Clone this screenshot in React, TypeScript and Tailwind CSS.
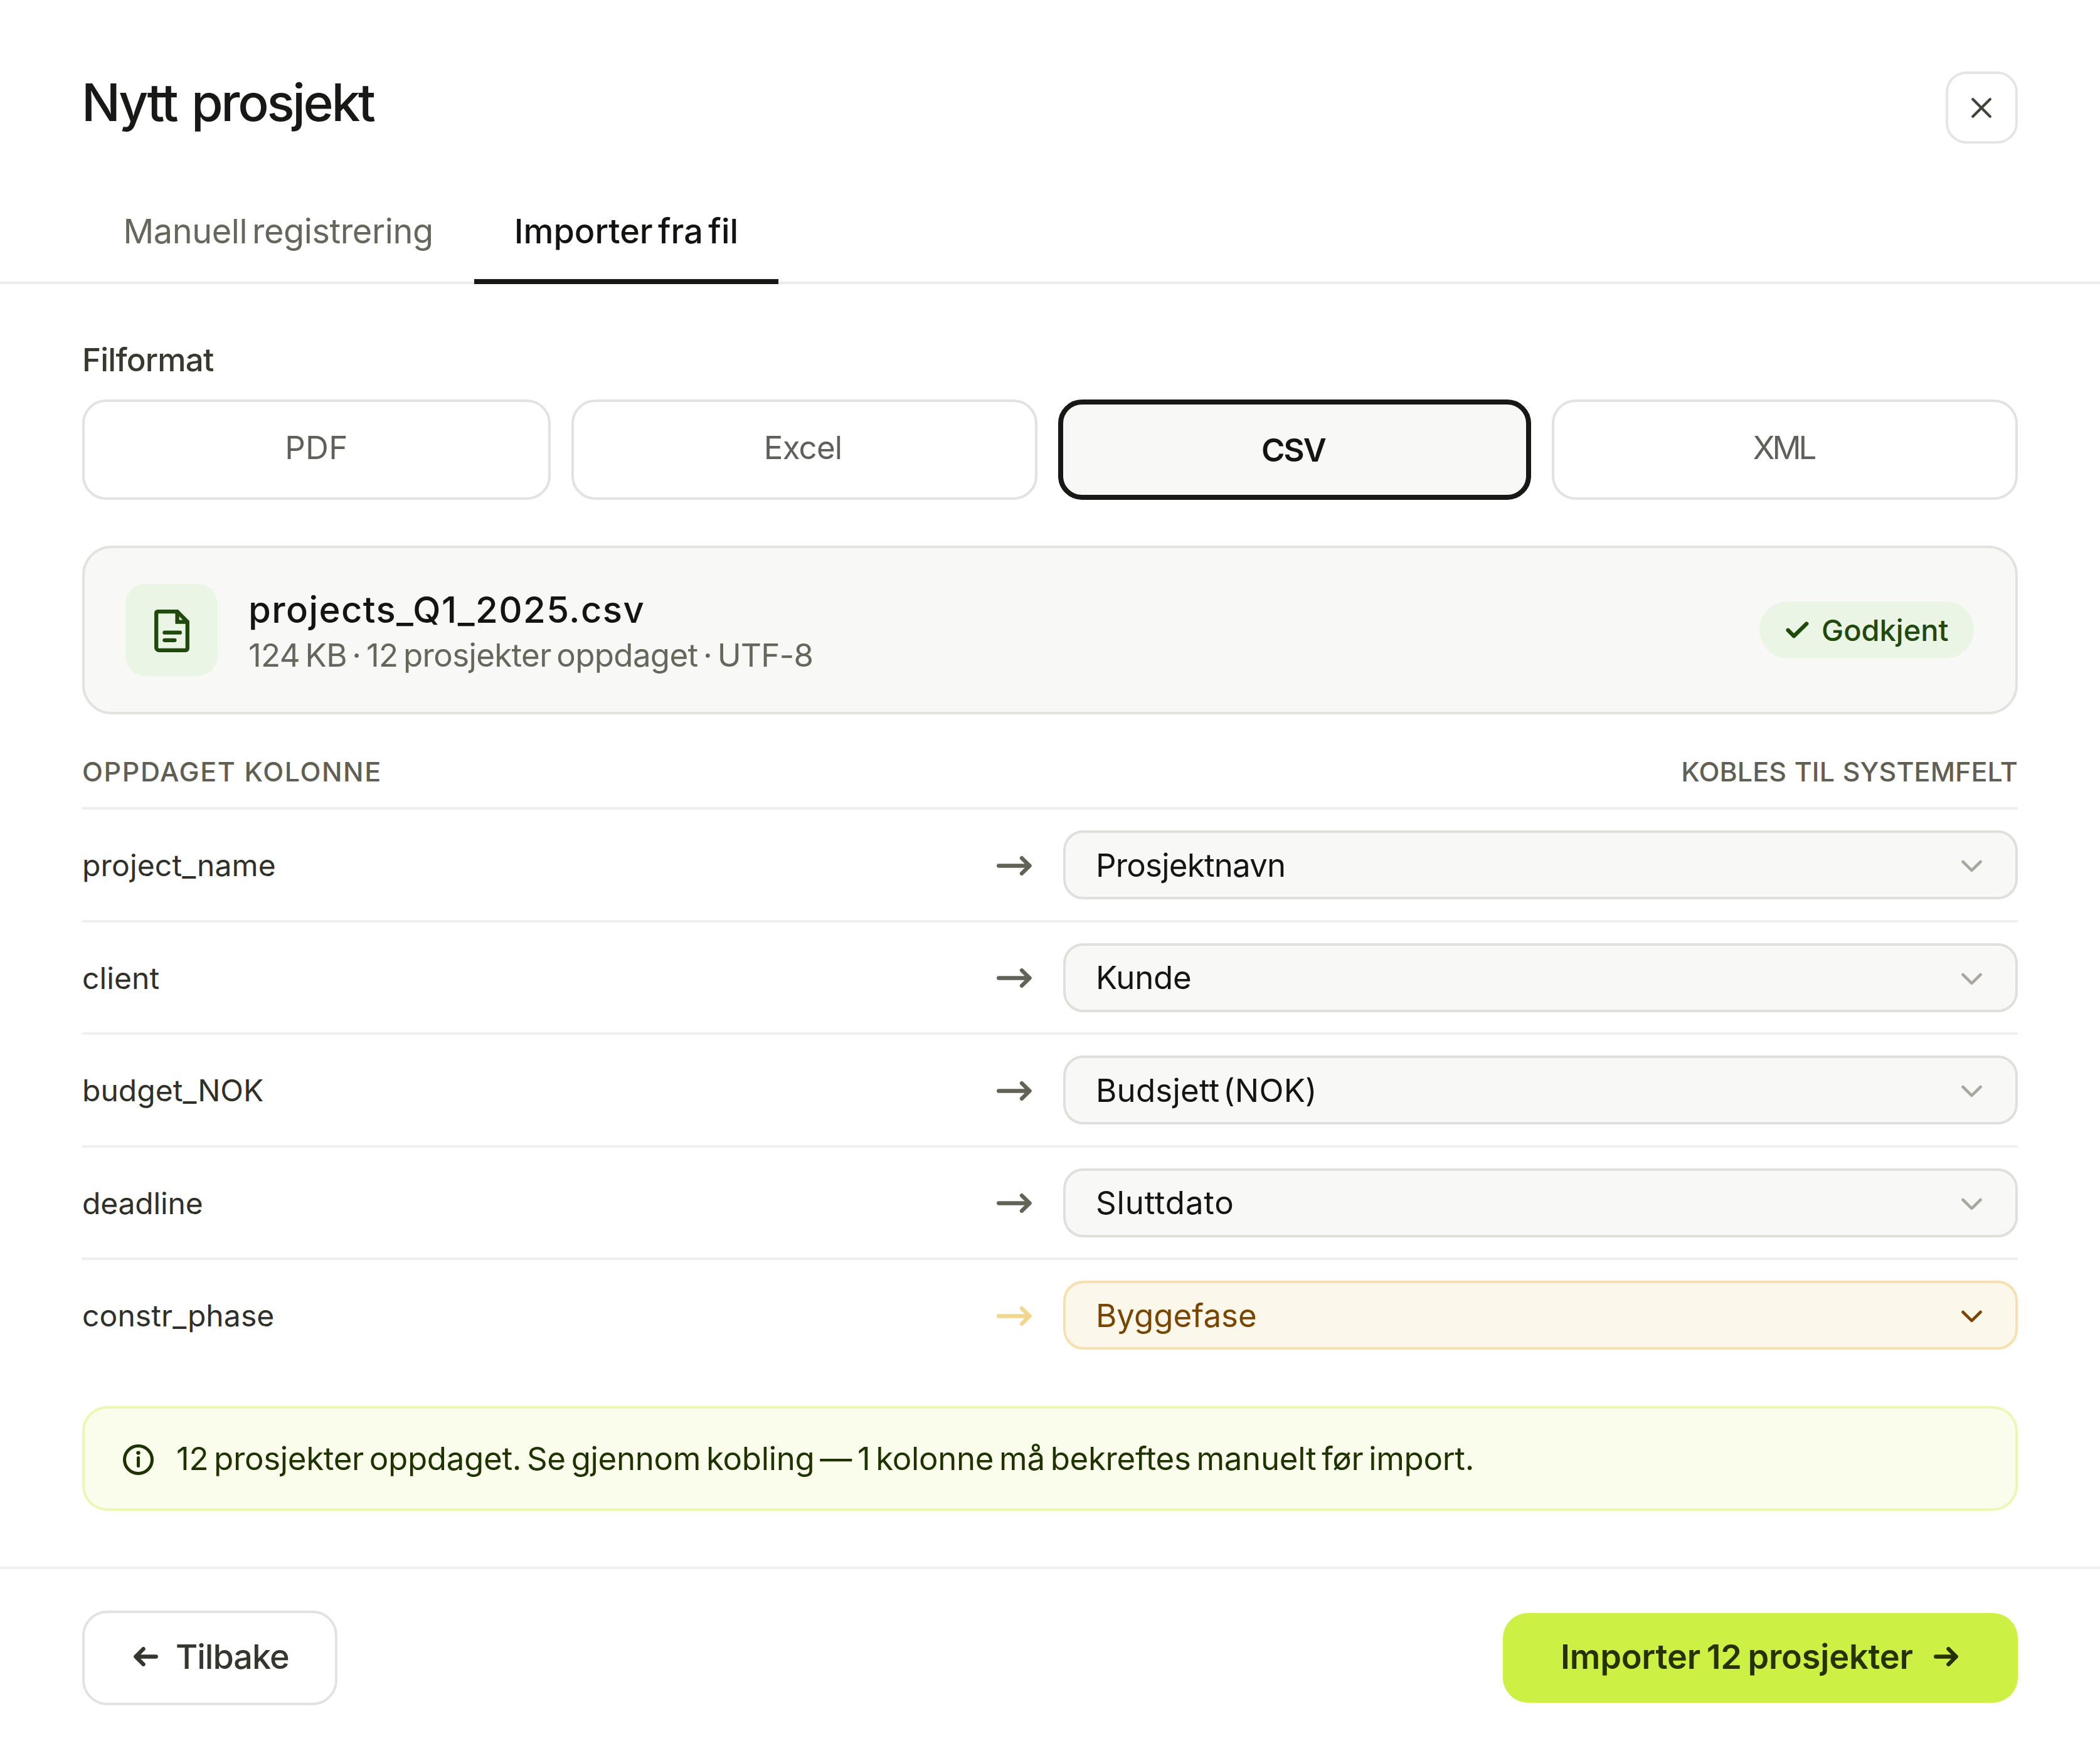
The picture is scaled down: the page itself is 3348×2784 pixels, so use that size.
import React from 'react';

const mappings = [
  { column: 'project_name', spacing: 'tracking-[0.15px]', field: 'Prosjektnavn', fieldSpacing: 'tracking-[-0.8px]' },
  { column: 'client', spacing: 'tracking-[0.1px]', field: 'Kunde', fieldSpacing: 'tracking-[-0.27px]' },
  { column: 'budget_NOK', spacing: 'tracking-[0.05px]', field: 'Budsjett (NOK)', fieldSpacing: 'tracking-[0.2px] [word-spacing:-9px]' },
  { column: 'deadline', spacing: 'tracking-[-0.15px]', field: 'Sluttdato', fieldSpacing: 'tracking-[0.8px]' },
  { column: 'constr_phase', spacing: 'tracking-[0.1px]', field: 'Byggefase', fieldSpacing: 'tracking-[0px]', warn: true },
];

function CloseIcon() {
  return (
    <svg className="h-8 w-8" viewBox="0 0 32 32" fill="none" stroke="currentColor" strokeWidth="4.3" strokeLinecap="round">
      <path d="M2.3 2.3 29.7 29.7M29.7 2.3 2.3 29.7" />
    </svg>
  );
}

function LongArrow() {
  return (
    <svg className="h-[31px] w-[56px]" viewBox="0 0 56 31" fill="none" stroke="currentColor" strokeWidth="6.3" strokeLinecap="round" strokeLinejoin="round">
      <path d="M3.2 15.5H52.5M40 3.2 52.5 15.5 40 27.8" />
    </svg>
  );
}

function ShortArrow({ className = '' }: { className?: string }) {
  return (
    <svg className={`h-[31px] w-[39px] ${className}`} viewBox="0 0 39 31" fill="none" stroke="currentColor" strokeWidth="6.3" strokeLinecap="round" strokeLinejoin="round">
      <path d="M3.2 15.5H35.6M23.4 3.2 35.6 15.5 23.4 27.8" />
    </svg>
  );
}

function Chevron() {
  return (
    <svg className="h-5 w-[33px]" viewBox="0 0 33 20" fill="none" stroke="currentColor" strokeWidth="4.6" strokeLinecap="round" strokeLinejoin="round">
      <path d="M2.4 3 16.5 16.8 30.6 3" />
    </svg>
  );
}

function FileIcon() {
  return (
    <svg className="mt-[3px] h-[68px] w-[56px]" viewBox="0 0 56 68" fill="none" stroke="currentColor" strokeWidth="6.3" strokeLinecap="round" strokeLinejoin="round">
      <path d="M5.2 3.2H36.6L52.8 19.4V61.8a3 3 0 0 1-3 3H7.2a4 4 0 0 1-4-4V5.2a2 2 0 0 1 2-2z" />
      <path d="M36.6 3.6V19.6H52.4" strokeLinejoin="miter" />
      <path d="M16.4 36.7H40.8M16.4 48.8H32.4" />
    </svg>
  );
}

function CheckIcon() {
  return (
    <svg className="h-[27px] w-[37px]" viewBox="0 0 37 27" fill="none" stroke="currentColor" strokeWidth="6.3" strokeLinecap="round" strokeLinejoin="round">
      <path d="M3.6 13.8 13 23.2 33.2 3.6" />
    </svg>
  );
}

function InfoIcon() {
  return (
    <svg className="mt-[4px] h-[49px] w-[49px]" viewBox="0 0 49 49" fill="none" stroke="currentColor" strokeWidth="5">
      <circle cx="24.5" cy="24.5" r="22" />
      <path d="M24.5 21.6V34.4" strokeLinecap="round" />
      <circle cx="24.5" cy="13.6" r="3.2" fill="currentColor" stroke="none" />
    </svg>
  );
}

const formatBase = 'flex h-[160px] items-center justify-center rounded-[38px] text-[51px] leading-none';
const formatIdle = 'border-4 border-[#e2e2e0] text-[#60605a] pb-[7px]';

export default function App() {
  return (
    <div className="flex h-[2784px] w-[3348px] flex-col bg-white font-['Inter',sans-serif] text-[#141412]">
      <header className="flex items-start justify-between px-[131px] pt-[114px]">
        <h1 className="-ml-[1px] pt-[2px] text-[82px] font-medium leading-[96px] tracking-[-3.3px] text-[#181816] [word-spacing:5px]">Nytt prosjekt</h1>
        <button className="flex h-[115px] w-[115px] items-center justify-center rounded-[33px] border-4 border-[#e5e5e5] pr-[2px] text-[#43433c]">
          <CloseIcon />
        </button>
      </header>

      <nav className="mt-[53px] flex border-b-4 border-[#ebebeb] pl-[131px] text-[54px] leading-none">
        <button className="flex h-[167px] w-[625px] items-center justify-center pt-[6px] text-[#66665c] tracking-[-0.4px] [word-spacing:-7px]">
          Manuell registrering
        </button>
        <button className="-mb-1 flex h-[171px] w-[485px] items-center justify-center border-b-8 border-[#171715] pt-[10px] font-medium text-[#121210] tracking-[0px] [word-spacing:-6px]">
          Importer fra fil
        </button>
      </nav>

      <main className="flex flex-col px-[131px] pt-[91px]">
        <div className="text-[51px] font-medium leading-[60px] tracking-[-0.77px] text-[#38382f]">Filformat</div>
        <div className="mt-[33px] flex gap-[33px]">
          <button className={`${formatBase} ${formatIdle} w-[747px] tracking-[0.3px]`}>PDF</button>
          <button className={`${formatBase} ${formatIdle} w-[743px] pr-1 tracking-[-0.8px]`}>Excel</button>
          <button className={`${formatBase} w-[755px] border-8 border-[#181816] bg-[#f8f8f6] pr-1 font-semibold tracking-[-2px]`}>CSV</button>
          <button className={`${formatBase} ${formatIdle} w-[743px] pr-1 tracking-[-4px]`}>XML</button>
        </div>

        <section className="mt-[73px] flex h-[269px] items-center rounded-[47px] border-4 border-[#e2e2df] bg-[#f8f8f6] pl-[65px] pr-[66px]">
          <div className="flex h-[147px] w-[147px] items-center justify-center rounded-[32px] bg-[#eaf5e5] text-[#1f4a0c]">
            <FileIcon />
          </div>
          <div className="ml-[49px] flex flex-col">
            <div className="text-[58px] font-medium leading-[80px] tracking-[1.4px]">projects_Q1_2025.csv</div>
            <div className="text-[51px] leading-[66px] tracking-[-0.65px] text-[#66665c] [word-spacing:-5.2px]">124 KB · 12 prosjekter oppdaget · UTF-8</div>
          </div>
          <div className="ml-auto flex h-[91px] w-[342px] items-center gap-5 rounded-full bg-[#eaf5e5] pl-[42px] text-[47px] font-medium leading-none text-[#1f4a0c]">
            <CheckIcon />
            <span>Godkjent</span>
          </div>
        </section>

        <div className="mt-16 flex justify-between border-b-4 border-[#efefef] pb-[30px] text-[43px] font-medium leading-[54px] text-[#5f5f54]">
          <span className="tracking-[1.6px] [word-spacing:0px]">OPPDAGET KOLONNE</span>
          <span className="tracking-[0.1px] [word-spacing:1px]">KOBLES TIL SYSTEMFELT</span>
        </div>

        {mappings.map((m) => (
          <div key={m.column} className="flex h-[179.6px] items-start border-b-4 border-[#efefef] pt-[33px] last-of-type:border-0">
            <div className={`flex h-[110px] flex-1 items-center pt-[2px] text-[48px] leading-none text-[#30302b] ${m.spacing}`}>{m.column}</div>
            <div className={`flex h-[110px] items-center pt-[2px] ${m.warn ? 'text-[#f0d68e]' : 'text-[#626257]'}`}>
              <LongArrow />
            </div>
            <div
              className={`ml-[50px] flex h-[110px] w-[1522px] items-center justify-between rounded-[32px] border-4 pl-[48px] pr-[53px] text-[51px] leading-none ${
                m.warn ? 'border-[#f5e0ae] bg-[#fcf7eb] text-[#784600]' : 'border-[#dfdfdc] bg-[#f8f8f6] text-[#141412]'
              }`}
            >
              <span className={m.fieldSpacing}>{m.field}</span>
              <span className={m.warn ? 'mt-1 text-[#784600]' : 'mt-1 text-[#a8a89e]'}>
                <Chevron />
              </span>
            </div>
          </div>
        ))}

        <aside className="mt-[53px] flex h-[167px] items-center rounded-[40px] border-4 border-[#eaf8b4] bg-[#fafdeb] pl-[61px] text-[#1e3300]">
          <InfoIcon />
          <p className="ml-9 whitespace-nowrap text-[51px] leading-none tracking-[-0.34px] [word-spacing:-5.1px]">
            12 prosjekter oppdaget. Se gjennom kobling — 1 kolonne må bekreftes manuelt før import.
          </p>
        </aside>
      </main>

      <footer className="mt-[89px] flex items-center justify-between border-t-4 border-[#efefef] px-[131px] pt-[66px] text-[54px] leading-none">
        <button className="flex h-[151px] w-[407px] items-center rounded-[40px] border-4 border-[#e2e2e2] pb-[3px] pl-[78px] font-medium tracking-[-1px] text-[#36362f]">
          <ShortArrow className="rotate-180" />
          <span className="ml-7">Tilbake</span>
        </button>
        <button className="flex h-[143px] w-[821px] items-center justify-between rounded-[40px] bg-[#cdf045] pb-[3px] pl-[92px] pr-[95px] font-semibold text-[#263300]">
          <span className="tracking-[-0.2px] [word-spacing:-3.6px]">Importer 12 prosjekter</span>
          <ShortArrow />
        </button>
      </footer>
    </div>
  );
}
